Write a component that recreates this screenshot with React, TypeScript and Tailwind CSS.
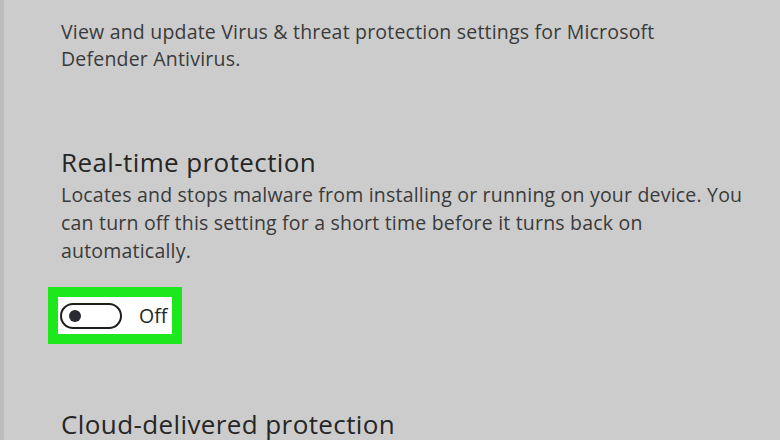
export default function App() {
    const font = { fontFamily: '"Open Sans", "Noto Sans", sans-serif' };
    return (
        <div className="w-[780px] h-[440px] overflow-hidden bg-[#cccccc] border-l-4 border-[#bcbcbc]" style={font}>
            <div className="pl-[57px] pt-[18px]">
                <p className="text-[19.5px] leading-[27px] text-[#3a3a3a] tracking-[0.2px]">
                    View and update Virus &amp; threat protection settings for Microsoft
                    <br />
                    Defender Antivirus.
                </p>

                <h2 className="mt-[73px] text-[26px] leading-[34px] text-[#262626] tracking-[0.4px]">Real-time protection</h2>
                <p className="mt-[2px] text-[19.5px] leading-[28px] text-[#3a3a3a] tracking-[0.2px]">
                    Locates and stops malware from installing or running on your device. You
                    <br />
                    can turn off this setting for a short time before it turns back on
                    <br />
                    automatically.
                </p>

                <div className="mt-[22px] -ml-[13px] w-[134px] h-[57px] border-[10px] border-[#1ce81c] bg-white flex items-center">
                    <div className="ml-[2px] w-[62px] h-[26px] rounded-full border-2 border-[#1e1e1e] flex items-center">
                        <div className="ml-[7px] w-[12px] h-[12px] rounded-full bg-[#2a2a33]" />
                    </div>
                    <span className="ml-[17px] text-[19.5px] text-[#262626]">Off</span>
                </div>

                <h2 className="mt-[63px] text-[26px] leading-[34px] text-[#262626] tracking-[0.4px]">Cloud-delivered protection</h2>
            </div>
        </div>
    );
}
